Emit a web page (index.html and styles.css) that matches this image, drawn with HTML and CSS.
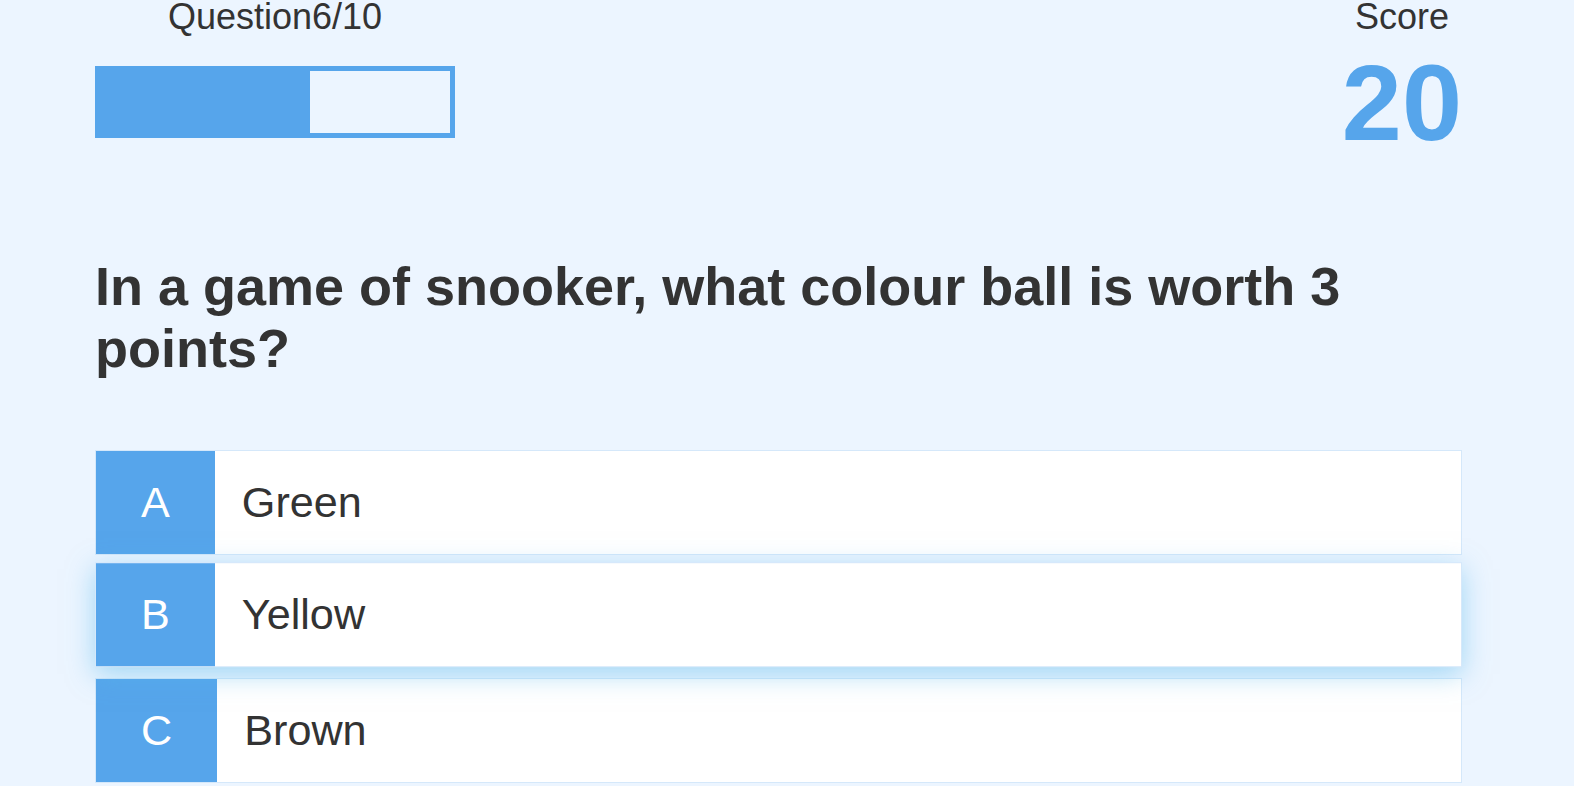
FILE: index.html
```html
<!DOCTYPE html>
<html lang="en">
<head>
<meta charset="utf-8">
<title>Quiz</title>
<link rel="stylesheet" href="styles.css">
</head>
<body>
<div class="container">
  <div class="game">
    <div class="hud">
      <div class="hud-item">
        <p class="hud-prefix">Question6/10</p>
        <div class="progress-bar">
          <div class="progress-bar-full" style="width: 60%;"></div>
        </div>
      </div>
      <div class="hud-item">
        <p class="hud-prefix">Score</p>
        <h1 class="hud-main-text">20</h1>
      </div>
    </div>
    <h2 class="question">In a game of snooker, what colour ball is worth 3 points?</h2>
    <div class="choice-container">
      <p class="choice-prefix">A</p>
      <p class="choice-text">Green</p>
    </div>
    <div class="choice-container is-hovered">
      <p class="choice-prefix">B</p>
      <p class="choice-text">Yellow</p>
    </div>
    <div class="choice-container">
      <p class="choice-prefix">C</p>
      <p class="choice-text">Brown</p>
    </div>
  </div>
</div>
</body>
</html>
```
FILE: styles.css
```css
html {
  background-color: #ecf5ff;
}

* {
  box-sizing: border-box;
  margin: 0;
  padding: 0;
  font-family: "Liberation Sans", Arial, Helvetica, sans-serif;
  color: #333;
}

body {
  margin: 0;
  overflow: hidden;
  background-color: #ecf5ff;
}

.container {
  width: 1367px;
  margin-left: 95px;
}

.hud {
  display: flex;
  justify-content: space-between;
}

.hud-item {
  display: flex;
  flex-direction: column;
}

.hud-prefix {
  text-align: center;
  font-size: 36px;
  line-height: 34px;
}

.hud-main-text {
  text-align: center;
  font-size: 108px;
  font-weight: bold;
  color: #56a5eb;
  margin-top: 5.8px;
  margin-bottom: 90px;
}

.progress-bar {
  width: 360px;
  height: 72px;
  border: 5.4px solid #56a5eb;
  margin-top: 32px;
}

.progress-bar-full {
  height: 100%;
  background-color: #56a5eb;
}

.question {
  font-size: 54px;
  font-weight: bold;
  margin-bottom: 71px;
}

.choice-container {
  display: flex;
  width: 100%;
  margin-bottom: 9px;
  font-size: 43.2px;
  border: 1px solid rgba(86, 165, 235, 0.25);
  background-color: #fff;
}

.choice-container.is-hovered {
  box-shadow: 0 7.2px 25.2px 0 rgba(86, 185, 235, 0.5);
  transform: translateY(-1.8px);
}

.choice-prefix {
  padding: 27px 45px;
  background-color: #56a5eb;
  color: #fff;
}

.choice-text {
  padding: 27px;
  width: 100%;
}
```
